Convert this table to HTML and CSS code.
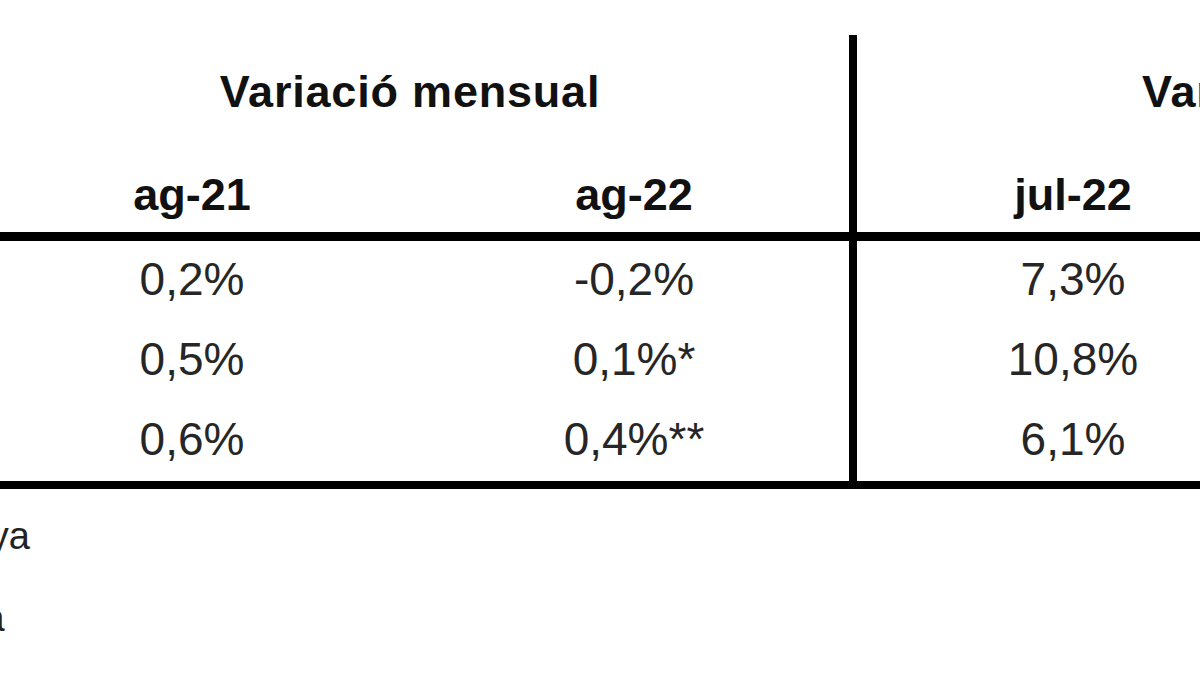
FILE: index.html
```html
<!DOCTYPE html>
<html lang="ca">
<head>
<meta charset="utf-8">
<title>IPC</title>
<link rel="stylesheet" href="styles.css">
</head>
<body>
<div class="sheet">
  <table class="ipc">
    <colgroup>
      <col class="c-label">
      <col class="c-a">
      <col class="c-b">
      <col class="c-c">
      <col class="c-d">
    </colgroup>
    <thead>
      <tr class="grp-row">
        <th class="lbl" rowspan="2"></th>
        <th class="grp" colspan="2">Variació mensual</th>
        <th class="grp div" colspan="2">Variació anual</th>
      </tr>
      <tr class="sub-row">
        <th class="sub">ag-21</th>
        <th class="sub shift">ag-22</th>
        <th class="sub div">jul-22</th>
        <th class="sub">ag-22</th>
      </tr>
    </thead>
    <tbody>
      <tr>
        <td class="lbl">Andorra</td>
        <td>0,2%</td>
        <td class="shift">-0,2%</td>
        <td class="div">7,3%</td>
        <td>6,8%</td>
      </tr>
      <tr>
        <td class="lbl">Espanya</td>
        <td>0,5%</td>
        <td class="shift">0,1%*</td>
        <td class="div">10,8%</td>
        <td>10,4%</td>
      </tr>
      <tr class="last">
        <td class="lbl">França</td>
        <td>0,6%</td>
        <td class="shift">0,4%**</td>
        <td class="div">6,1%</td>
        <td>5,8%</td>
      </tr>
    </tbody>
  </table>
  <div class="notes">
    <p>* Dada avançada Espanya</p>
    <p>**Dada avançada França</p>
  </div>
</div>
</body>
</html>
```
FILE: styles.css
```css
html, body {
  margin: 0;
  padding: 0;
  background: #ffffff;
}
body {
  width: 1200px;
  height: 675px;
  overflow: hidden;
  font-family: "Liberation Sans", Arial, sans-serif;
  color: #1a1a1a;
}
.sheet {
  margin-left: -440px;
  padding-top: 35px;
  width: 2200px;
}
.ipc {
  border-collapse: separate;
  border-spacing: 0;
  table-layout: fixed;
  width: 2181px;
}
.c-label { width: 411px; }
.c-a { width: 442px; }
.c-b { width: 436px; }
.c-c { width: 440px; }
.c-d { width: 452px; }

.ipc th {
  font-weight: bold;
  font-size: 45px;
  color: #111;
  text-align: center;
  padding: 0;
}
.grp-row th {
  height: 114px;
  letter-spacing: 0.8px;
  vertical-align: middle;
}
.sub-row th {
  height: 74px;
  padding-top: 9px;
  vertical-align: middle;
  border-bottom: 9px solid #000;
}
.ipc th.lbl {
  border-bottom: 9px solid #000;
}
.ipc td {
  font-size: 46px;
  color: #262626;
  text-align: center;
  height: 76px;
  padding: 0 0 4px;
  vertical-align: middle;
}
.ipc tr.last td {
  border-bottom: 8px solid #000;
}
.ipc td.lbl {
  text-align: left;
  padding-left: 20px;
}
.ipc .div {
  border-left: 8px solid #000;
}
.ipc .shift {
  padding-left: 6px;
}
.notes {
  margin-top: 6px;
  padding-left: 20px;
}
.notes p {
  margin: 0;
  font-size: 38px;
  line-height: 82px;
  color: #222;
}
```
